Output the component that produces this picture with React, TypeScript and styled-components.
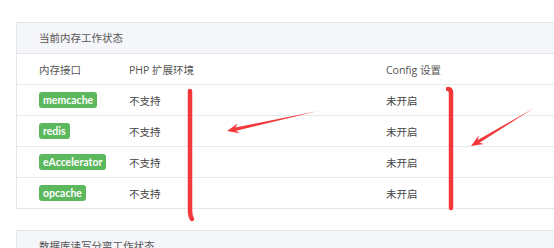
import React from 'react'
import styled, { createGlobalStyle } from 'styled-components'

const GlobalStyle = createGlobalStyle`
body {
  margin: 0;
  background: #fff;
  overflow: hidden;
  font-family: "Open Sans", "Noto Sans CJK SC", sans-serif;
}
`

const stores = [
  { name: 'memcache', php: '不支持', config: '未开启' },
  { name: 'redis', php: '不支持', config: '未开启' },
  { name: 'eAccelerator', php: '不支持', config: '未开启' },
  { name: 'opcache', php: '不支持', config: '未开启' },
]

const App = () => {
  return (
    <Page>
      <GlobalStyle />
      <Panel>
        <PanelHead>当前内存工作状态</PanelHead>
        <Row head>
          <Cell>内存接口</Cell>
          <Cell>PHP 扩展环境</Cell>
          <Cell>Config 设置</Cell>
        </Row>
        {stores.map((s, i) => (
          <Row key={s.name} last={i === stores.length - 1}>
            <Cell><Label>{s.name}</Label></Cell>
            <Cell>{s.php}</Cell>
            <Cell>{s.config}</Cell>
          </Row>
        ))}
      </Panel>

      <Panel>
        <PanelHead>数据库读写分离工作状态</PanelHead>
      </Panel>

      {/* red pen marks on top */}
      <Marks width="554" height="248" viewBox="0 0 554 248">
        <g fill="none" stroke="#f2383a" strokeWidth="4.5" strokeLinecap="round" strokeLinejoin="round">
          <path d="M190 91 L190 210 Q190 216 192 219" />
          <path d="M448 89 Q451 89 451 93 L451 208" />
        </g>
        <g fill="#f2383a">
          <polygon points="318,111 235.5,127.5 237.6,123.5 227,131 239.8,133.3 236.1,130.7" />
          <polygon points="534,108 477.9,140 478.7,135.5 471,146 483.9,144.1 479.5,142.8" />
        </g>
      </Marks>
    </Page>
  )
}

export default App

const Page = styled.div`
position: relative;
width: 554px;
height: 248px;
padding: 22px 0 0 16px;
box-sizing: border-box;
display: flex;
flex-direction: column;
gap: 21px;
overflow: hidden;
`

const Panel = styled.div`
width: 580px;
flex-shrink: 0;
border: 1px solid #e4e6eb;
background: #fff;
`

const PanelHead = styled.div`
height: 30px;
line-height: 30px;
padding-left: 22px;
background: #f5f6f9;
border-bottom: 1px solid #e4e6eb;
color: #555;
font-size: 10.5px;
`

const Row = styled.div<{ head?: boolean; last?: boolean }>`
display: grid;
grid-template-columns: 112px 257px 1fr;
align-items: center;
height: 30px;
border-bottom: ${p => (p.last ? 'none' : '1px solid #e8e9ed')};
color: ${p => (p.head ? '#555' : '#444')};
font-size: 10.5px;
`

const Cell = styled.div`
white-space: nowrap;
&:first-child { padding-left: 22px; }
`

const Label = styled.span`
display: inline-block;
height: 16px;
line-height: 16px;
padding: 0 4px;
border-radius: 3px;
background: #5cb85c;
color: #fff;
font-family: Lato, "Open Sans", sans-serif;
font-size: 10.5px;
font-weight: 700;
`

const Marks = styled.svg`
position: absolute;
left: 0;
top: 0;
pointer-events: none;
`
